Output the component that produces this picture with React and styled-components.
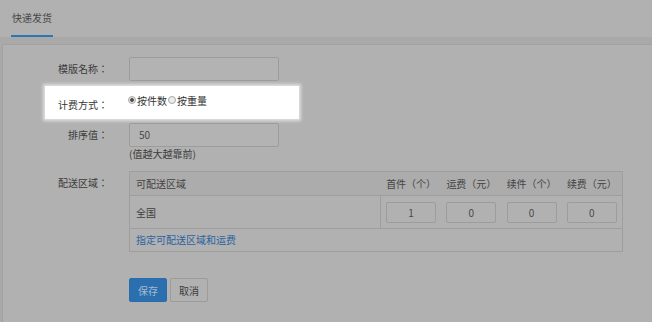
import React from "react";
import styled, { createGlobalStyle } from "styled-components";

const GlobalStyle = createGlobalStyle`
  html, body {
    margin: 0;
    padding: 0;
    background: #a9a9a9;
    overflow: hidden;
  }
  body {
    font-family: "Noto Sans CJK SC", "Noto Sans", sans-serif;
    font-size: 10px;
    color: #3c3c3c;
  }
`;

const TabBar = styled.div`
  display: flex;
  height: 37px;
  padding-left: 11px;
  background: #b1b1b1;
`;

const Tab = styled.div`
  height: 35px;
  line-height: 35px;
  padding: 0 1px;
  color: #474747;
  border-bottom: 2px solid #2c76b5;
`;

const Content = styled.div`
  padding: 7px 0 0 2px;
`;

const Panel = styled.div`
  height: calc(100vh - 44px);
  box-sizing: border-box;
  background: #b1b1b1;
  border: 1px solid #a2a2a2;
  border-right: none;
  border-bottom: none;
  padding: 12px 0 0 42px;
`;

const Row = styled.div`
  display: flex;
  align-items: flex-start;
  margin-top: ${(p) => p.$top || 0}px;
`;

const HighlightRow = styled(Row)`
  width: 254px;
  height: 33px;
  box-sizing: border-box;
  padding-top: 7px;
  background: #fff;
  box-shadow: 0 0 3px 2px rgba(255, 255, 255, 0.6);
`;

const Label = styled.div`
  width: 63px;
  flex: none;
  text-align: right;
  line-height: 24px;
  margin-right: 21px;
  white-space: nowrap;
  font-family: "Noto Sans CJK JP", "Noto Sans CJK SC", sans-serif;
  color: ${(p) => (p.$lit ? "#333" : "#3c3c3c")};
`;

const Field = styled.div`
  display: flex;
  flex-direction: column;
`;

const TextInput = styled.div`
  width: 150px;
  height: 24px;
  box-sizing: border-box;
  border: 1px solid #9c9c9c;
  border-radius: 2px;
  background: #b3b3b3;
  padding-left: 9px;
  line-height: 22px;
  color: #4a4a4a;
`;

const Hint = styled.div`
  line-height: 14px;
  color: #3c3c3c;
`;

const RadioGroup = styled.div`
  display: flex;
  align-items: center;
  height: 14px;
  margin-left: -1px;
  color: #333;
`;

const RadioOption = styled.label`
  display: flex;
  align-items: center;
  margin-right: 1px;
`;

const RadioDot = styled.span`
  width: 8px;
  height: 8px;
  box-sizing: border-box;
  border-radius: 50%;
  border: 1px solid #a8a8a8;
  background: ${(p) =>
    p.$checked ? "radial-gradient(circle, #555 0 1.6px, #e6e6e6 2.2px)" : "#ececec"};
  margin-right: 1px;
`;

const Table = styled.div`
  width: 494px;
  border: 1px solid #9e9e9e;
  box-sizing: border-box;
`;

const TableHead = styled.div`
  display: grid;
  grid-template-columns: 251px repeat(4, 1fr);
  height: 23px;
  line-height: 23px;
  background: #acacac;
  border-bottom: 1px solid #9e9e9e;
  color: #444;
`;

const HeadCell = styled.div`
  text-align: ${(p) => (p.$left ? "left" : "center")};
  padding-left: ${(p) => (p.$left ? "6px" : "0")};
  white-space: nowrap;
`;

const TableRow = styled.div`
  display: grid;
  grid-template-columns: 251px repeat(4, 1fr);
  height: 32px;
  border-bottom: 1px solid #9e9e9e;
`;

const Cell = styled.div`
  display: flex;
  align-items: center;
  justify-content: ${(p) => (p.$left ? "flex-start" : "center")};
  padding-left: ${(p) => (p.$left ? "6px" : "0")};
  border-right: ${(p) => (p.$divider ? "1px solid #9e9e9e" : "none")};
`;

const NumInput = styled.div`
  width: 50px;
  height: 21px;
  box-sizing: border-box;
  border: 1px solid #9c9c9c;
  border-radius: 2px;
  text-align: center;
  line-height: 19px;
  color: #4a4a4a;
`;

const LinkRow = styled.div`
  height: 22px;
  line-height: 22px;
  padding-left: 6px;
  color: #2a62a0;
`;

const Buttons = styled.div`
  display: flex;
  gap: 3px;
  margin: 26px 0 0 84px;
`;

const Button = styled.button`
  width: 38px;
  height: 24px;
  box-sizing: border-box;
  padding: 0;
  border-radius: 2px;
  font-family: inherit;
  font-size: 10px;
  border: 1px solid ${(p) => (p.$primary ? "#2a6dac" : "#9c9c9c")};
  background: ${(p) => (p.$primary ? "#2b6fae" : "#b1b1b1")};
  color: ${(p) => (p.$primary ? "#a3b9d0" : "#3c3c3c")};
`;

const fees = [
  { title: "首件（个）", value: "1" },
  { title: "运费（元）", value: "0" },
  { title: "续件（个）", value: "0" },
  { title: "续费（元）", value: "0" },
];

const App = () => {
  return (
    <>
      <GlobalStyle />
      <TabBar>
        <Tab>快递发货</Tab>
      </TabBar>
      <Content>
        <Panel>
          <Row>
            <Label>模版名称：</Label>
            <TextInput />
          </Row>
          <HighlightRow $top={5}>
            <Label $lit>计费方式：</Label>
            <RadioGroup>
              <RadioOption>
                <RadioDot $checked />
                按件数
              </RadioOption>
              <RadioOption>
                <RadioDot />
                按重量
              </RadioOption>
            </RadioGroup>
          </HighlightRow>
          <Row $top={4}>
            <Label>排序值：</Label>
            <Field>
              <TextInput>50</TextInput>
              <Hint>(值越大越靠前)</Hint>
            </Field>
          </Row>
          <Row $top={10}>
            <Label>配送区域：</Label>
            <Table>
              <TableHead>
                <HeadCell $left>可配送区域</HeadCell>
                {fees.map((f) => (
                  <HeadCell key={f.title}>{f.title}</HeadCell>
                ))}
              </TableHead>
              <TableRow>
                <Cell $left $divider>
                  全国
                </Cell>
                {fees.map((f) => (
                  <Cell key={f.title}>
                    <NumInput>{f.value}</NumInput>
                  </Cell>
                ))}
              </TableRow>
              <LinkRow>指定可配送区域和运费</LinkRow>
            </Table>
          </Row>
          <Buttons>
            <Button $primary>保存</Button>
            <Button>取消</Button>
          </Buttons>
        </Panel>
      </Content>
    </>
  );
};

export default App;
